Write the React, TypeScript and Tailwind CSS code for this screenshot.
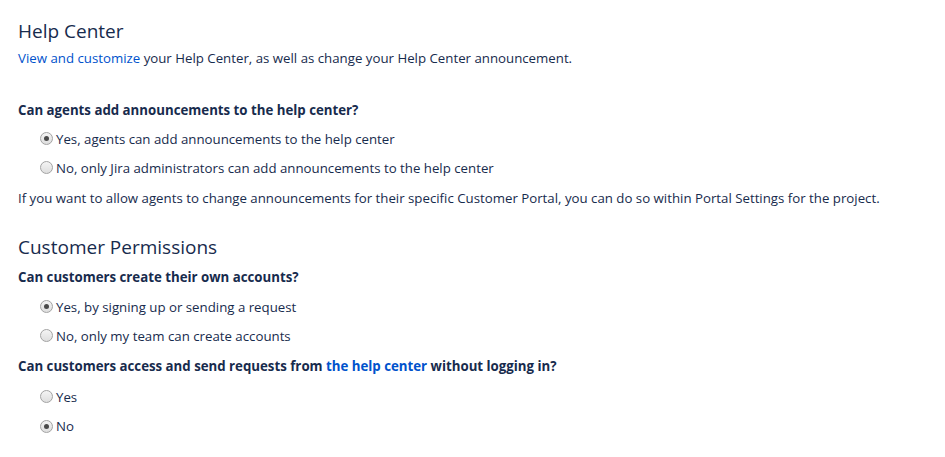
import React from "react"

function Radio({ checked }: { checked?: boolean }) {
  return (
    <span className="flex h-[13px] w-[13px] shrink-0 items-center justify-center rounded-full border border-[#a3a3a3] bg-gradient-to-b from-[#f4f4f4] to-[#dedede]">
      {checked && <span className="h-[5px] w-[5px] rounded-full bg-[#4a4a4a]" />}
    </span>
  )
}

function Option({ label, checked }: { label: string; checked?: boolean }) {
  return (
    <label className="flex h-[29px] items-center gap-[3px] pl-[22px]">
      <Radio checked={checked} />
      <span>{label}</span>
    </label>
  )
}

export default function App() {
  return (
    <div
      className="min-h-[457px] w-[945px] bg-white pl-[18px] pt-[17px] text-[13.25px] leading-[20px] text-[#172b4d]"
      style={{ fontFamily: '"Open Sans", "Noto Sans", sans-serif' }}
    >
      <h1 className="text-[19px] font-medium leading-[28px]">Help Center</h1>
      <p className="mt-[3px]">
        <a className="text-[#0052cc]">View and customize</a> your Help Center, as well as change your Help Center
        announcement.
      </p>

      <h3 className="mt-[32px] font-bold">Can agents add announcements to the help center?</h3>
      <div className="mt-[4px]">
        <Option checked label="Yes, agents can add announcements to the help center" />
        <Option label="No, only Jira administrators can add announcements to the help center" />
      </div>
      <p className="mt-[6px]">
        If you want to allow agents to change announcements for their specific Customer Portal, you can do so within
        Portal Settings for the project.
      </p>

      <h2 className="mt-[25px] text-[19px] font-medium leading-[28px]">Customer Permissions</h2>
      <h3 className="mt-[6px] font-bold">Can customers create their own accounts?</h3>
      <div className="mt-[5px]">
        <Option checked label="Yes, by signing up or sending a request" />
        <Option label="No, only my team can create accounts" />
      </div>
      <h3 className="mt-[6px] font-bold">
        Can customers access and send requests from <a className="text-[#0052cc]">the help center</a> without
        logging in?
      </h3>
      <div className="mt-[6px]">
        <Option label="Yes" />
        <label className="flex h-[30px] items-center gap-[3px] pl-[22px]">
          <Radio checked />
          <span>No</span>
        </label>
      </div>
    </div>
  )
}
